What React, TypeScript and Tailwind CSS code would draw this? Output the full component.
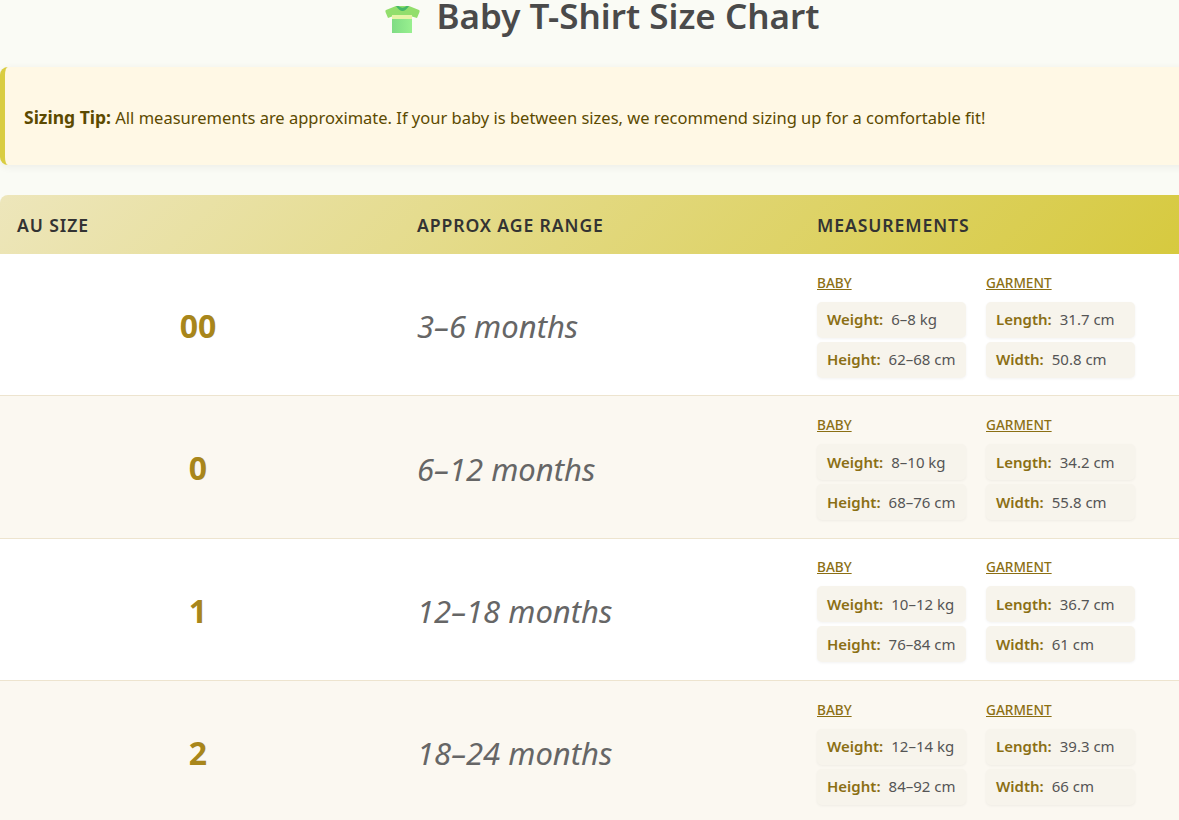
const rows = [
  { size: "00", age: "3–6 months", weight: "6–8 kg", height: "62–68 cm", length: "31.7 cm", width: "50.8 cm" },
  { size: "0", age: "6–12 months", weight: "8–10 kg", height: "68–76 cm", length: "34.2 cm", width: "55.8 cm" },
  { size: "1", age: "12–18 months", weight: "10–12 kg", height: "76–84 cm", length: "36.7 cm", width: "61 cm" },
  { size: "2", age: "18–24 months", weight: "12–14 kg", height: "84–92 cm", length: "39.3 cm", width: "66 cm" },
];

function ShirtIcon() {
  return (
    <svg viewBox="0 0 35 27" className="h-[27px] w-[35px] shrink-0 mt-[6px]" aria-hidden="true">
      <defs>
        <linearGradient id="body" x1="0" x2="1" y1="0" y2="0">
          <stop offset="0" stopColor="#7fdc84" />
          <stop offset="1" stopColor="#98f08f" />
        </linearGradient>
      </defs>
      <path d="M11 0 L1 4 Q0 4.500 0.500 6 L3 12 L7 10.500 L7 9 L27 9 L27 10.500 L32 12 L34.500 6 Q35 4.500 34 4 L24 0 Z" fill="#92de6c" />
      <path d="M11 0 Q17.500 10 24 0 L21.500 0 Q17.500 3.500 13.500 0 Z" fill="#45b868" />
      <rect x="7" y="9" width="20" height="4" fill="#e6f4a6" />
      <rect x="7" y="13" width="20" height="14" fill="url(#body)" />
    </svg>
  );
}

function Stat({ label, value }: { label: string; value: string }) {
  return (
    <div className="h-[36px] rounded-[5px] bg-[#f7f4ec] pl-[10px] flex items-center whitespace-nowrap text-[15px] text-[#555] shadow-[0_1px_3px_rgba(0,0,0,0.05)]">
      <span className="font-semibold text-[#8b6f14] mr-[8px]">{label}</span>
      {value}
    </div>
  );
}

function Group({ title, items }: { title: string; items: [string, string][] }) {
  return (
    <div className="w-[149px]">
      <div className="text-[13.6px] leading-[17px] font-medium text-[#8b6f14] underline mb-[11px]">{title}</div>
      <div className="flex flex-col gap-[4px]">
        {items.map(([l, v]) => (
          <Stat key={l} label={l} value={v} />
        ))}
      </div>
    </div>
  );
}

export default function App() {
  return (
    <div className="h-[820px] w-[1179px] overflow-hidden bg-[#fafbf5] font-['Noto_Sans',sans-serif]">
      <div className="w-[1204px]">
        <h1 className="h-[31px] flex items-start justify-center gap-[17px] text-[35px] leading-[31px] font-semibold text-[#4a4a4a]">
          <ShirtIcon />
          <span>Baby T-Shirt Size Chart</span>
        </h1>
        <div className="mt-[36px] h-[98px] flex items-center pl-[19px] pt-[2px] rounded-[8px] border-l-[5px] border-[#d9cd42] bg-[#fff8e5] text-[16.5px] text-[#5c4a00] shadow-[0_2px_8px_rgba(0,0,0,0.06)]">
          <p><strong className="font-bold text-[17.5px]">Sizing Tip:</strong> All measurements are approximate. If your baby is between sizes, we recommend sizing up for a comfortable fit!</p>
        </div>
        <div className="mt-[30px] rounded-t-[8px] overflow-hidden">
          <div className="grid grid-cols-[400px_400px_404px] h-[59px] pt-[1px] items-center bg-[linear-gradient(135deg,#ede6bb,#d6c93c)] text-[17.6px] font-semibold tracking-[0.9px] text-[#333]">
            <div className="pl-[17px]">AU SIZE</div>
            <div className="pl-[17px]">APPROX AGE RANGE</div>
            <div className="pl-[17px]">MEASUREMENTS</div>
          </div>
          {rows.map((r, i) => (
            <div key={r.size} className={`grid grid-cols-[400px_400px_404px] h-[142.33px] items-center border-b border-[#ede4cf] ${i % 2 ? "bg-[#fbf8f1]" : "bg-white"}`}>
              <div className="text-center pr-[4px] pt-[3px] text-[32px] font-bold text-[#a8861b]">{r.size}</div>
              <div className="pl-[17px] pt-[4px] text-[31px] italic text-[#666]">{r.age}</div>
              <div className="pl-[17px] pt-[2px] flex gap-[20px]">
                <Group title="BABY" items={[["Weight:", r.weight], ["Height:", r.height]]} />
                <Group title="GARMENT" items={[["Length:", r.length], ["Width:", r.width]]} />
              </div>
            </div>
          ))}
        </div>
      </div>
    </div>
  );
}
